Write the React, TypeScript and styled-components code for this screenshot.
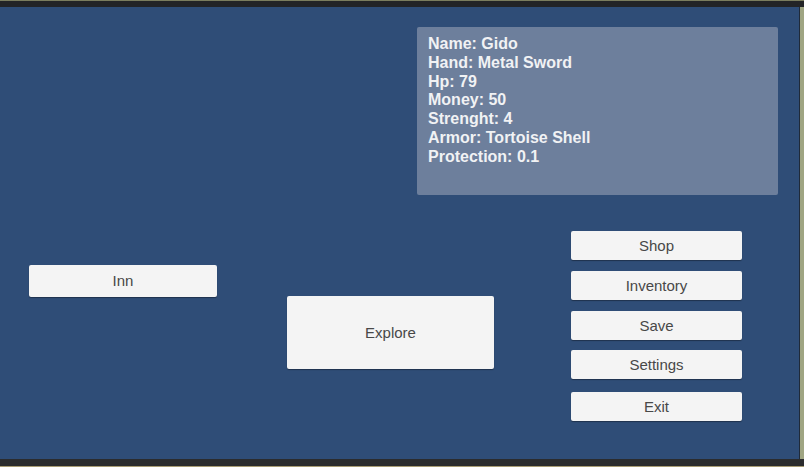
import React from 'react'
import styled, { createGlobalStyle } from 'styled-components'

const GlobalStyle = createGlobalStyle`
  html, body {
    margin: 0;
    padding: 0;
    background: #2a2b2d;
  }
`

const Frame = styled.div`
  width: 804px;
  height: 467px;
  display: flex;
  flex-direction: column;
  background: #9fa582;
  overflow: hidden;
`

const TopBar = styled.div`
  height: 7px;
  flex-shrink: 0;
  background: #232426;
  border-top: 1px solid #7b7d5e;
  box-sizing: border-box;
`

const BottomBar = styled.div`
  height: 8px;
  flex-shrink: 0;
  background: #2b2c2e;
  border-bottom: 1px solid #a89c74;
  box-sizing: border-box;
`

const Stage = styled.div`
  flex: 1;
  display: flex;
  flex-direction: column;
  background: #2f4d77;
  margin-right: 4px;
  border-right: 1px solid #1f2a3a;
`

const StatsPanel = styled.div`
  align-self: flex-end;
  width: 361px;
  height: 168px;
  margin-top: 20px;
  margin-right: 21px;
  box-sizing: border-box;
  padding: 8px 11px;
  background: #6d7f9c;
  border-radius: 2px;
  font-family: 'Liberation Sans', Arial, sans-serif;
  font-weight: bold;
  font-size: 16px;
  line-height: 18.8px;
  color: #f1f2f4;
`

const StatLine = styled.div`
  white-space: nowrap;
`

const Controls = styled.div`
  display: flex;
  align-items: flex-start;
  margin-top: 36px;
  padding-left: 29px;
`

const Button = styled.button<{ $w: number; $h: number; $top?: number; $gap?: number }>`
  width: ${p => p.$w}px;
  height: ${p => p.$h}px;
  margin-top: ${p => p.$top ?? 0}px;
  margin-left: ${p => p.$gap ?? 0}px;
  padding: 0 0 1px;
  border: none;
  border-radius: 2px;
  background: #f4f4f4;
  box-shadow: 0 1px 1px rgba(0, 0, 0, 0.35);
  font-family: 'Liberation Sans', Arial, sans-serif;
  font-size: 15px;
  color: #484848;
  flex-shrink: 0;
`

const Menu = styled.div`
  display: flex;
  flex-direction: column;
  margin-left: 77px;
`

const MenuButton = styled(Button)`
  margin-bottom: ${p => (p.$gap ?? 11)}px;
  margin-left: 0;
`

const stats = [
  'Name: Gido',
  'Hand: Metal Sword',
  'Hp: 79',
  'Money: 50',
  'Strenght: 4',
  'Armor: Tortoise Shell',
  'Protection: 0.1',
]

const menu = [
  { label: 'Shop', after: 11 },
  { label: 'Inventory', after: 11 },
  { label: 'Save', after: 10 },
  { label: 'Settings', after: 13 },
  { label: 'Exit', after: 0 },
]

export default function App() {
  return (
    <>
      <GlobalStyle />
      <Frame>
        <TopBar />
        <Stage>
          <StatsPanel>
            {stats.map(s => (
              <StatLine key={s}>{s}</StatLine>
            ))}
          </StatsPanel>
          <Controls>
            <Button $w={188} $h={32} $top={34}>Inn</Button>
            <Button $w={207} $h={73} $top={65} $gap={70}>Explore</Button>
            <Menu>
              {menu.map(m => (
                <MenuButton key={m.label} $w={171} $h={29} $gap={m.after}>
                  {m.label}
                </MenuButton>
              ))}
            </Menu>
          </Controls>
        </Stage>
        <BottomBar />
      </Frame>
    </>
  )
}
